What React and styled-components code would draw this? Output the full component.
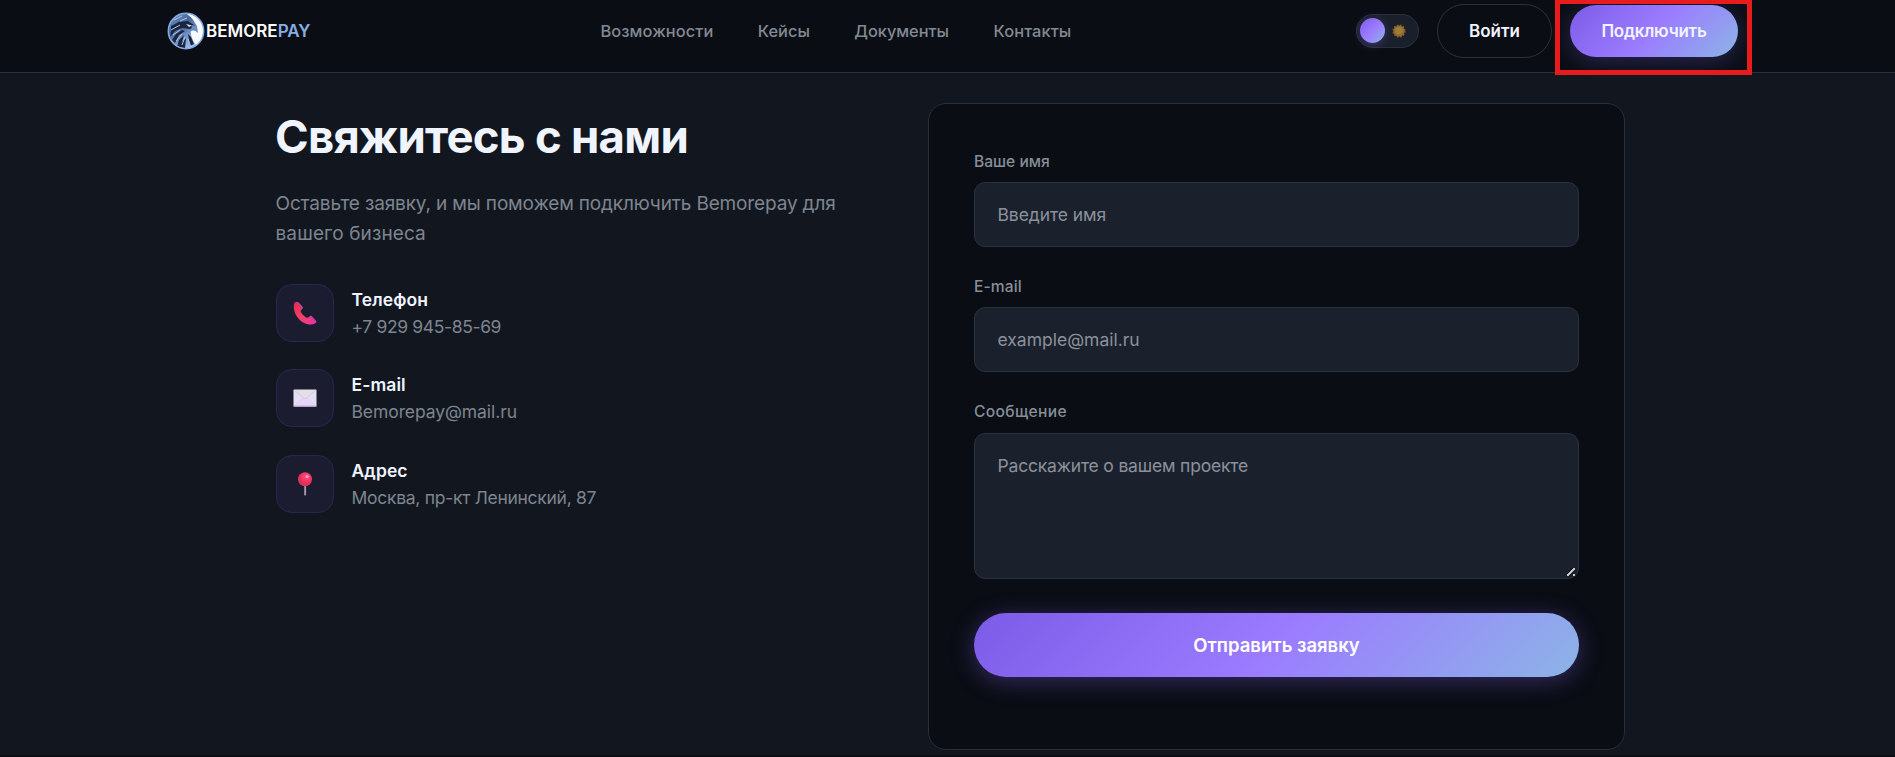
import React from "react";
import styled, { createGlobalStyle, css } from "styled-components";

const GlobalStyle = createGlobalStyle`
  * {
    box-sizing: border-box;
  }
  body {
    margin: 0;
    background: #0a0e14;
    color: #f0f4ff;
    font-family: "Inter", "Liberation Sans", sans-serif;
    overflow: hidden;
  }
`;

const accent = "linear-gradient(135deg, #7c5ce7 0%, #9b7cff 50%, #8cb4e6 100%)";

const Page = styled.div`
  height: 755px;
  background: #12171f;
`;

const Header = styled.header`
  display: flex;
  align-items: center;
  height: 73px;
  padding: 0 157px 11px 166px;
  background: #0a0e14;
  border-bottom: 1px solid #2a303d;
`;

const Brand = styled.a`
  display: flex;
  align-items: center;
  gap: 1.5px;
  flex: 0 0 434.5px;
  padding-left: 0.5px;
  font-size: 17px;
  font-weight: 600;
  letter-spacing: 0;
  color: #fff;

  svg {
    display: block;
  }
  span span {
    color: #86aee3;
  }
`;

const Nav = styled.nav`
  display: flex;
  gap: 44.5px;
`;

const NavLink = styled.a`
  font-size: 16.4px;
  font-weight: 500;
  letter-spacing: ${(p) => p.$track}px;
  color: #828993;
`;

const Actions = styled.div`
  display: flex;
  align-items: center;
  margin-left: auto;
`;

const Toggle = styled.div`
  display: flex;
  align-items: center;
  gap: 6.5px;
  width: 63px;
  height: 34px;
  margin-right: 18px;
  padding: 0 3px;
  border: 1px solid #28313d;
  border-radius: 17px;
  background: #1a202b;

  svg {
    display: block;
  }
`;

const Knob = styled.span`
  width: 25px;
  height: 25px;
  border-radius: 50%;
  background: ${accent};
  box-shadow: 0 2px 9px rgba(124, 92, 231, 0.35);
`;

const Button = styled.button`
  height: ${(p) => (p.$primary ? 52 : 54)}px;
  width: ${(p) => (p.$primary ? 168 : 115)}px;
  padding: 0;
  border: 1px solid #2a303d;
  border-radius: 27px;
  background: transparent;
  color: #f0f4ff;
  font: 600 17px "Inter", sans-serif;
  ${(p) =>
    p.$primary &&
    css`
      border: 0;
      background: ${accent};
      letter-spacing: -0.25px;
      box-shadow: 0 4px 22px rgba(124, 92, 231, 0.3);
    `}
`;

const ButtonSlot = styled.div`
  position: relative;
  margin-left: 18px;
`;

const Marker = styled.span`
  position: absolute;
  inset: -6px -14px -18px -15px;
  border: 5px solid #e81c1c;
  pointer-events: none;
`;

const Contacts = styled.main`
  display: grid;
  grid-template-columns: 1fr 697px;
  padding: 30px 270px 0 275px;
`;

const Info = styled.section`
  padding: 7px 0 0 1px;
`;

const Title = styled.h1`
  margin: 0 0 0 -1px;
  font-size: 45.5px;
  line-height: 54px;
  font-weight: 700;
  letter-spacing: -0.75px;
`;

const Lead = styled.p`
  width: 590px;
  margin: 25px 0 35px -0.5px;
  font-size: 19px;
  line-height: 30px;
  letter-spacing: -0.15px;
  color: #7d8590;
`;

const LeadEnd = styled.span`
  letter-spacing: 0.12px;
`;

const ContactList = styled.div`
  display: grid;
  gap: 27.4px;
`;

const Contact = styled.div`
  display: flex;
  align-items: center;
  gap: 17.5px;
  height: 58px;
`;

const IconBox = styled.div`
  display: grid;
  place-items: center;
  width: 58px;
  height: 58px;
  border: 1px solid #2a2650;
  border-radius: 16px;
  background: #1c1c30;
`;

const ContactName = styled.div`
  font-size: 17.5px;
  line-height: 27px;
  font-weight: 600;
  letter-spacing: 0.1px;
`;

const ContactValue = styled.div`
  font-size: 17.5px;
  line-height: 27px;
  letter-spacing: ${(p) => p.$track}px;
  color: #7d8590;
`;

const Form = styled.form`
  height: 647px;
  padding: 45px;
  border: 1px solid #272f3b;
  border-radius: 18px;
  background: #0a0d14;
`;

const Field = styled.div`
  margin-bottom: 27.5px;
`;

const Label = styled.label`
  display: block;
  margin-bottom: 8px;
  font-size: 15.6px;
  line-height: 25px;
  font-weight: 500;
  letter-spacing: ${(p) => p.$track || 0}px;
  color: #868e98;
`;

const control = css`
  display: block;
  width: 100%;
  border: 1px solid #28313f;
  border-radius: 11px;
  background: #1b212c;
  font: 400 17.5px/27px "Inter", sans-serif;
  letter-spacing: ${(p) => p.$track || 0}px;
  color: #f0f4ff;

  &::placeholder {
    color: #8b919c;
    opacity: 1;
  }
`;

const Input = styled.input`
  ${control}
  height: 64.5px;
  padding: 0 22.5px;
`;

const TextArea = styled.textarea`
  ${control}
  height: 146px;
  margin-top: 9px;
  padding: 18px 22.5px;
  resize: vertical;

  /* short grip stroke with a dot under it */
  &::-webkit-resizer {
    background:
      linear-gradient(#c4c6ca, #c4c6ca) right 3px bottom 2px / 2px 2px no-repeat,
      linear-gradient(
          135deg,
          transparent 36%,
          #0a0d14 36% 42%,
          #c4c6ca 42% 57%,
          #0a0d14 57% 64%,
          transparent 64%
        )
        right 3px bottom 2px / 8px 8px no-repeat;
  }
`;

const Submit = styled.button`
  display: block;
  width: 100%;
  height: 64px;
  margin-top: 34px;
  border: 0;
  border-radius: 32px;
  background: ${accent};
  box-shadow: 0 4px 23px rgba(124, 92, 231, 0.38);
  color: #fff;
  font: 600 18.5px "Inter", sans-serif;
  letter-spacing: 0;
`;

const EagleLogo = () => (
  <svg width="38" height="38" viewBox="0 0 38 38">
    <defs>
      <linearGradient id="feather" x1="0" y1="0" x2="0.6" y2="1">
        <stop offset="0" stopColor="#7fa3d6" />
        <stop offset="0.45" stopColor="#48669a" />
        <stop offset="1" stopColor="#9dbcea" />
      </linearGradient>
      <clipPath id="disc">
        <circle cx="19" cy="19" r="17.4" />
      </clipPath>
    </defs>
    <circle cx="19" cy="19" r="17.8" fill="#f7f9fc" />
    <g clipPath="url(#disc)">
      <path
        d="M0 0H17C21 3 26 6 28 11C30 13 31 16 30.500 21C29 18 26 18 24 19C23 24 26 28 29 33L27 38H0Z"
        fill="url(#feather)"
      />
      <path
        d="M4 14L12 10L21 9L27 13L28 16L22 17L15 16L8 19L3 25L4 20ZM5 28L9 22L15 18L18 19L12 23L8 31ZM10 35L12 28L17 23L15 30L19 26L18 36ZM21 22L24 25L27 32L23 34Z"
        fill="#1b2640"
      />
      <path
        d="M7 8L15 4M4 18L13 13M6 23L13 18M9 29L15 22M15 33L18 25M21 27L24 35M13 9L20 6"
        stroke="#a9c5ee"
        strokeWidth="1"
        fill="none"
      />
      <path d="M19 12L25 13.500L22 15Z" fill="#d7e5fa" />
      <path d="M25 13C29 14 31 17 30.500 21C29 18 27 17.500 24 18Z" fill="#6e8fc2" />
    </g>
    <circle cx="19" cy="19" r="17.7" fill="none" stroke="#82a9df" strokeWidth="1.5" />
  </svg>
);

const SunIcon = () => (
  <svg width="14" height="14" viewBox="0 0 14 14">
    <circle cx="7" cy="7" r="5.9" fill="none" stroke="#8a5a2a" strokeWidth="1.4" strokeDasharray="1.8 1.3" />
    <circle cx="7" cy="7" r="5.6" fill="#946a2c" />
    <circle cx="7" cy="6.6" r="3.8" fill="#98803a" />
  </svg>
);

const PhoneIcon = () => (
  <svg width="24" height="24" viewBox="0 0 24 24">
    <defs>
      <linearGradient id="handset" x1="0" y1="0" x2="1" y2="1">
        <stop offset="0" stopColor="#e8264a" />
        <stop offset="0.5" stopColor="#ee4468" />
        <stop offset="1" stopColor="#ef2fa6" />
      </linearGradient>
    </defs>
    <path
      d="M1.2 2.2C.2 6 .8 12 5.200 17.200C9 21.800 13.500 23.600 18.500 23.500C20.500 23.400 22.500 22.500 23.400 21.300C24 20.400 19 14.800 17.800 14.700C17 14.700 15.200 17 13.800 16.700C11.500 15.800 8.200 12.400 7.600 10.300C7.400 9.200 9.900 7.800 9.700 6.700C9.300 5 5 .6 3.700 .7C2.600 .8 1.600 1.300 1.200 2.200Z"
      fill="url(#handset)"
    />
    <path d="M4.300 1.200L9.200 6.600L7.700 8.600M17.700 15.300L23 21" stroke="#b442a2" strokeWidth="1.5" fill="none" />
  </svg>
);

const MailIcon = () => (
  <svg width="24" height="18" viewBox="0 0 24 18">
    <rect x="0.500" y="0.500" width="23" height="17" rx="0.800" fill="#e6dff0" />
    <path d="M.5 17.200L9.700 8.700H14.300L23.500 17.200Z" fill="#e6d6f5" />
    <path d="M1 1L11 9.300Q12 10 13 9.300L23 1" fill="#e4deea" stroke="#d3c4e0" strokeWidth="0.900" />
    <path d="M1 17L9.500 9M23 17L14.500 9" stroke="#dccbea" strokeWidth="0.700" />
    <path d="M.5 17H23.500" stroke="#cdafe8" strokeWidth="1" />
  </svg>
);

const PinIcon = () => (
  <svg width="16" height="24" viewBox="0 0 16 24">
    <defs>
      <radialGradient id="pin" cx="0.600" cy="0.300" r="0.700">
        <stop offset="0" stopColor="#ff5487" />
        <stop offset="0.600" stopColor="#ee2f60" />
        <stop offset="1" stopColor="#c93650" />
      </radialGradient>
    </defs>
    <rect x="7.200" y="12" width="1.900" height="11.500" rx="0.800" fill="#a594ae" />
    <circle cx="8" cy="7.300" r="7" fill="url(#pin)" />
    <circle cx="10.200" cy="4.500" r="1.600" fill="#ff9dbd" />
  </svg>
);

const links = [
  { text: "Возможности", track: 0.07 },
  { text: "Кейсы", track: 0 },
  { text: "Документы", track: -0.05 },
  { text: "Контакты", track: 0.1 },
];

const contacts = [
  { name: "Телефон", value: "+7 929 945-85-69", track: -0.36, icon: <PhoneIcon /> },
  { name: "E-mail", value: "Bemorepay@mail.ru", track: -0.08, icon: <MailIcon /> },
  { name: "Адрес", value: "Москва, пр-кт Ленинский, 87", track: -0.28, icon: <PinIcon /> },
];

const App = () => {
  return (
    <Page>
      <GlobalStyle />
      <Header>
        <Brand>
          <EagleLogo />
          <span>
            BEMORE<span>PAY</span>
          </span>
        </Brand>
        <Nav>
          {links.map((link) => (
            <NavLink key={link.text} $track={link.track}>
              {link.text}
            </NavLink>
          ))}
        </Nav>
        <Actions>
          <Toggle>
            <Knob />
            <SunIcon />
          </Toggle>
          <Button>Войти</Button>
          <ButtonSlot>
            <Button $primary>Подключить</Button>
            <Marker />
          </ButtonSlot>
        </Actions>
      </Header>
      <Contacts>
        <Info>
          <Title>Свяжитесь с нами</Title>
          <Lead>
            Оставьте заявку, и мы поможем подключить Bemorepay для{" "}
            <LeadEnd>вашего бизнеса</LeadEnd>
          </Lead>
          <ContactList>
            {contacts.map((item) => (
              <Contact key={item.name}>
                <IconBox>{item.icon}</IconBox>
                <div>
                  <ContactName>{item.name}</ContactName>
                  <ContactValue $track={item.track}>{item.value}</ContactValue>
                </div>
              </Contact>
            ))}
          </ContactList>
        </Info>
        <Form>
          <Field>
            <Label>Ваше имя</Label>
            <Input placeholder="Введите имя" $track={-0.08} />
          </Field>
          <Field>
            <Label $track={0.1}>E-mail</Label>
            <Input placeholder="example@mail.ru" />
          </Field>
          <Field>
            <Label $track={0.35}>Сообщение</Label>
            <TextArea placeholder="Расскажите о вашем проекте" $track={-0.18} />
          </Field>
          <Submit type="button">Отправить заявку</Submit>
        </Form>
      </Contacts>
    </Page>
  );
};

export default App;
